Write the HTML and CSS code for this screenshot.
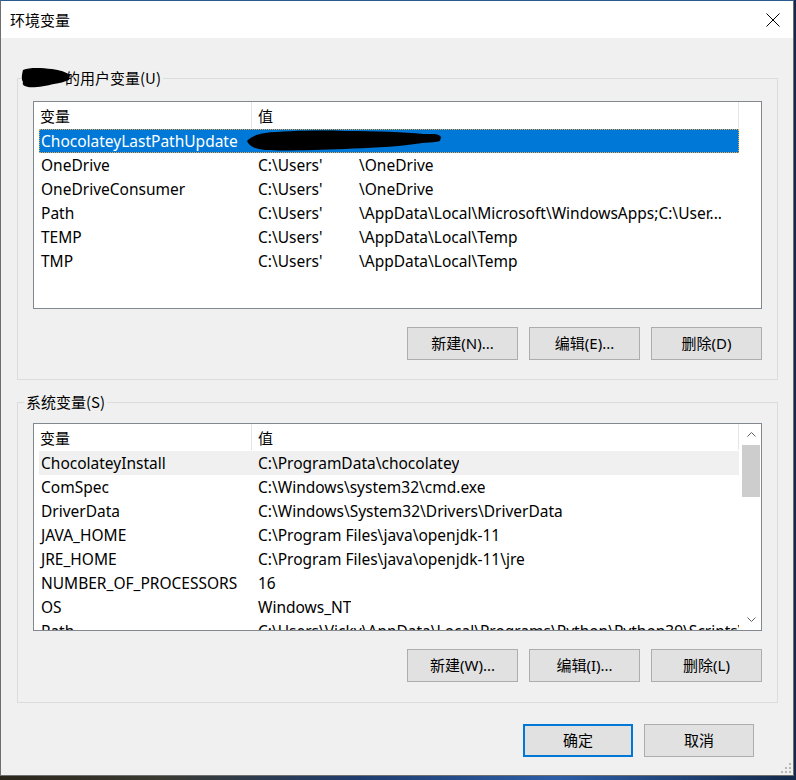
FILE: index.html
```html
<!DOCTYPE html>
<html lang="zh-CN">
<head>
<meta charset="utf-8">
<title>环境变量</title>
<link rel="stylesheet" href="styles.css">
</head>
<body>
<div class="window">
  <div class="titlebar">
    <span class="title">环境变量</span>
    <svg class="close" width="14" height="14" viewBox="0 0 14 14"><path d="M0.5 0.5 L13.5 13.5 M13.5 0.5 L0.5 13.5" stroke="#000" stroke-width="1" fill="none"/></svg>
  </div>
  <div class="content">
    <section class="group group-user">
      <span class="legend"><span class="hidden-name"></span>的用户变量(U)</span>
      <svg class="scribble scribble-name" width="52" height="24" viewBox="0 0 52 24"><path d="M3 4 C10 1 22 2 32 3 C40 4 46 6 50 9 L49 14 C44 16 40 17 34 18 C26 20 14 22 8 21 C4 20 2 19 3 16 C1 13 2 8 3 4 Z" fill="#000"/></svg>
      <div class="list">
        <div class="thead">
          <div class="th th-name">变量</div>
          <div class="th th-value">值</div>
        </div>
        <div class="row selected"><span class="c1">ChocolateyLastPathUpdate</span><span class="c2"></span></div>
        <div class="row"><span class="c1">OneDrive</span><span class="c2"><span class="user">C:\Users'</span><span class="rest">\OneDrive</span></span></div>
        <div class="row"><span class="c1">OneDriveConsumer</span><span class="c2"><span class="user">C:\Users'</span><span class="rest">\OneDrive</span></span></div>
        <div class="row"><span class="c1">Path</span><span class="c2"><span class="user">C:\Users'</span><span class="rest">\AppData\Local\Microsoft\WindowsApps;C:\User...</span></span></div>
        <div class="row"><span class="c1">TEMP</span><span class="c2"><span class="user">C:\Users'</span><span class="rest">\AppData\Local\Temp</span></span></div>
        <div class="row"><span class="c1">TMP</span><span class="c2"><span class="user">C:\Users'</span><span class="rest">\AppData\Local\Temp</span></span></div>
        <svg class="scribble scribble-value" width="200" height="26" viewBox="0 0 200 26"><path d="M2 13 C6 9 12 6 20 5 C40 3 70 2 100 3 C130 3 160 4 178 6 C186 6 194 5 196 9 L195 13 C190 15 180 14 170 16 C150 19 120 20 100 21 C70 22 40 23 20 22 C10 21 4 18 2 13 Z" fill="#000"/></svg>
      </div>
      <div class="btn-row">
        <button class="btn">新建(N)...</button>
        <button class="btn">编辑(E)...</button>
        <button class="btn">删除(D)</button>
      </div>
    </section>

    <section class="group group-sys">
      <span class="legend">系统变量(S)</span>
      <div class="list list-scroll">
        <div class="list-body">
          <div class="thead">
            <div class="th th-name">变量</div>
            <div class="th th-value">值</div>
          </div>
          <div class="row hover"><span class="c1">ChocolateyInstall</span><span class="c2">C:\ProgramData\chocolatey</span></div>
          <div class="row"><span class="c1">ComSpec</span><span class="c2">C:\Windows\system32\cmd.exe</span></div>
          <div class="row"><span class="c1">DriverData</span><span class="c2">C:\Windows\System32\Drivers\DriverData</span></div>
          <div class="row"><span class="c1">JAVA_HOME</span><span class="c2">C:\Program Files\java\openjdk-11</span></div>
          <div class="row"><span class="c1">JRE_HOME</span><span class="c2">C:\Program Files\java\openjdk-11\jre</span></div>
          <div class="row"><span class="c1">NUMBER_OF_PROCESSORS</span><span class="c2">16</span></div>
          <div class="row"><span class="c1">OS</span><span class="c2">Windows_NT</span></div>
          <div class="row"><span class="c1">Path</span><span class="c2">C:\Users\Vicky\AppData\Local\Programs\Python\Python39\Scripts\</span></div>
        </div>
        <div class="scrollbar">
          <div class="sb-arrow"><svg width="9" height="5" viewBox="0 0 9 5"><path d="M0.5 4.5 L4.5 0.5 L8.5 4.5" stroke="#606060" fill="none"/></svg></div>
          <div class="sb-thumb"></div>
          <div class="sb-track"></div>
          <div class="sb-arrow"><svg width="9" height="5" viewBox="0 0 9 5"><path d="M0.5 0.5 L4.5 4.5 L8.5 0.5" stroke="#606060" fill="none"/></svg></div>
        </div>
      </div>
      <div class="btn-row">
        <button class="btn">新建(W)...</button>
        <button class="btn">编辑(I)...</button>
        <button class="btn">删除(L)</button>
      </div>
    </section>

    <div class="dialog-buttons">
      <button class="btn btn-default">确定</button>
      <button class="btn">取消</button>
    </div>
  </div>
  <svg class="grip" width="12" height="12" viewBox="0 0 12 12">
    <rect x="9" y="1" width="2" height="2" fill="#b8b8b8"/>
    <rect x="5" y="5" width="2" height="2" fill="#b8b8b8"/><rect x="9" y="5" width="2" height="2" fill="#b8b8b8"/>
    <rect x="1" y="9" width="2" height="2" fill="#b8b8b8"/><rect x="5" y="9" width="2" height="2" fill="#b8b8b8"/><rect x="9" y="9" width="2" height="2" fill="#b8b8b8"/>
  </svg>
</div>
</body>
</html>
```

FILE: styles.css
```css
html, body {
  margin: 0;
  padding: 0;
}
body {
  width: 796px;
  height: 780px;
  overflow: hidden;
  background: linear-gradient(90deg, #2b261c 0%, #3a3a30 20%, #1f3c6e 45%, #2c5ea8 70%, #14294a 100%);
  font-family: "Noto Sans", "Noto Sans CJK SC", sans-serif;
  font-size: 15px;
  color: #000;
}
.window {
  position: relative;
  width: 794px;
  height: 776px;
  box-sizing: border-box;
  background: #f0f0f0;
  border: 1px solid #6e6e6e;
  border-top-color: #2a5b8e;
}
.titlebar {
  height: 37px;
  background: #fff;
  display: flex;
  align-items: center;
  justify-content: space-between;
  padding: 0 13px 0 9px;
}
.title {
  font-size: 15px;
  line-height: 20px;
  font-family: "Noto Sans CJK SC", sans-serif;
}
.close {
  display: block;
}
.content {
  padding: 40px 15px 0 16px;
}
.group {
  position: relative;
  border: 1px solid #dcdcdc;
  padding: 22px 15px 19px 15px;
}
.group-sys {
  margin-top: 22px;
  padding-top: 20px;
  padding-bottom: 20px;
}
.legend {
  position: absolute;
  left: 6px;
  top: -11px;
  line-height: 20px;
  padding: 0 2px;
  background: #f0f0f0;
  font-family: "Noto Sans CJK SC", sans-serif;
  display: flex;
}
.hidden-name {
  display: inline-block;
  width: 39px;
}
.scribble {
  position: absolute;
}
.scribble-name {
  left: 2px;
  top: -13px;
}
.scribble-value {
  left: 211px;
  top: 26px;
}
.list {
  position: relative;
  height: 208px;
  box-sizing: border-box;
  border: 1px solid #828790;
  background: #fff;
  overflow: hidden;
}
.list-scroll {
  display: flex;
}
.list-body {
  flex: 1;
  overflow: hidden;
}
.thead {
  display: flex;
  height: 26px;
  margin-bottom: 1px;
}
.th {
  box-sizing: border-box;
  border-right: 1px solid #e5e5e5;
  display: flex;
  align-items: center;
  font-family: "Noto Sans CJK SC", sans-serif;
}
.th-name {
  width: 218px;
  padding-left: 6px;
}
.th-value {
  width: 487px;
  padding-left: 6px;
}
.row {
  display: flex;
  align-items: center;
  height: 24px;
  width: 700px;
  margin-left: 5px;
  box-sizing: border-box;
  white-space: nowrap;
  font-size: 15.5px;
}
.row.selected {
  background: #0078d7;
  color: #fff;
  border: 1px dotted #f0a640;
}
.row.selected .c1 {
  padding-left: 1px;
}
.row.hover {
  background: #f0f0f0;
}
.c1 {
  width: 212px;
  flex: none;
  padding-left: 2px;
  box-sizing: border-box;
}
.c2 {
  padding-left: 7px;
  display: flex;
  overflow: hidden;
}
.user {
  display: inline-block;
  width: 63px;
  flex: none;
}
.rest {
  margin-left: 38px;
  flex: none;
}
.scrollbar {
  width: 20px;
  flex: none;
  display: flex;
  flex-direction: column;
  background: #fff;
}
.sb-arrow {
  height: 21px;
  display: flex;
  align-items: center;
  justify-content: center;
}
.sb-thumb {
  height: 52px;
  margin: 0 1px;
  background: #cdcdcd;
}
.sb-track {
  flex: 1;
}
.btn-row {
  display: flex;
  justify-content: flex-end;
  gap: 11px;
  margin-top: 18px;
}
.btn {
  width: 111px;
  height: 33px;
  box-sizing: border-box;
  border: 1px solid #adadad;
  background: #e1e1e1;
  font-family: "Noto Sans", "Noto Sans CJK SC", sans-serif;
  font-size: 15px;
  line-height: 20px;
  color: #000;
  padding: 0 0 2px 0;
  margin: 0;
}
.dialog-buttons {
  display: flex;
  justify-content: flex-end;
  gap: 11px;
  margin-top: 21px;
  margin-right: 24px;
}
.dialog-buttons .btn {
  width: 110px;
}
.btn-default {
  border: 2px solid #0078d7;
}
.grip {
  position: absolute;
  right: 1px;
  bottom: 1px;
}
```
